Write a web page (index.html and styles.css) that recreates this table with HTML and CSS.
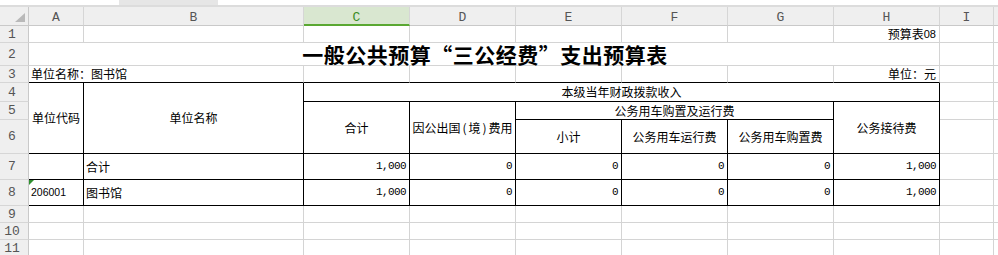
FILE: index.html
```html
<!DOCTYPE html>
<html lang="zh-CN">
<head>
<meta charset="utf-8">
<title>一般公共预算“三公经费”支出预算表</title>
<link rel="stylesheet" href="styles.css">
</head>
<body>
<div class="tabs"><div class="tab tab-a"></div><div class="tab tab-b"></div></div>
<div class="sheet">
  <!-- column headers -->
  <div class="ch corner"><svg width="10" height="9" viewBox="0 0 10 9"><polygon points="10,0 10,9 0,9" fill="#b9b9b9"/></svg></div>
  <div class="ch">A</div><div class="ch">B</div><div class="ch ch-sel">C</div><div class="ch">D</div><div class="ch">E</div><div class="ch">F</div><div class="ch">G</div><div class="ch">H</div><div class="ch">I</div><div class="ch ch-end"></div>

  <!-- row 1 -->
  <div class="rh">1</div>
  <div class="c"></div><div class="c"></div><div class="c"></div><div class="c"></div><div class="c"></div><div class="c"></div><div class="c"></div>
  <div class="c r bot">预算表<span class="latin">08</span></div>
  <div class="c"></div><div class="c"></div>

  <!-- row 2 -->
  <div class="rh">2</div>
  <div class="c title span8">一般公共预算“三公经费”支出预算表</div>
  <div class="c"></div><div class="c"></div>

  <!-- row 3 -->
  <div class="rh">3</div>
  <div class="c span2 bot kb">单位名称：图书馆</div>
  <div class="c kb"></div><div class="c kb"></div><div class="c kb"></div><div class="c kb"></div><div class="c kb"></div>
  <div class="c r bot kb">单位：元</div>
  <div class="c"></div><div class="c"></div>

  <!-- row 4 -->
  <div class="rh">4</div>
  <div class="c m k rows3">单位代码</div>
  <div class="c m k rows3">单位名称</div>
  <div class="c m k span6">本级当年财政拨款收入</div>
  <div class="c"></div><div class="c"></div>

  <!-- row 5 -->
  <div class="rh">5</div>
  <div class="c m k rows2">合计</div>
  <div class="c m k rows2">因公出国<span class="paren">(</span>境<span class="paren">)</span>费用</div>
  <div class="c m k span3">公务用车购置及运行费</div>
  <div class="c m k rows2">公务接待费</div>
  <div class="c"></div><div class="c"></div>

  <!-- row 6 -->
  <div class="rh">6</div>
  <div class="c m k">小计</div>
  <div class="c m k">公务用车运行费</div>
  <div class="c m k">公务用车购置费</div>
  <div class="c"></div><div class="c"></div>

  <!-- row 7 -->
  <div class="rh">7</div>
  <div class="c k"></div>
  <div class="c k">合计</div>
  <div class="c k r num">1,000</div>
  <div class="c k r num">0</div>
  <div class="c k r num">0</div>
  <div class="c k r num">0</div>
  <div class="c k r num">0</div>
  <div class="c k r num">1,000</div>
  <div class="c"></div><div class="c"></div>

  <!-- row 8 -->
  <div class="rh">8</div>
  <div class="c k code"><span class="flag"></span>206001</div>
  <div class="c k">图书馆</div>
  <div class="c k r num">1,000</div>
  <div class="c k r num">0</div>
  <div class="c k r num">0</div>
  <div class="c k r num">0</div>
  <div class="c k r num">0</div>
  <div class="c k r num">1,000</div>
  <div class="c"></div><div class="c"></div>

  <!-- rows 9-11 -->
  <div class="rh">9</div>
  <div class="c"></div><div class="c"></div><div class="c"></div><div class="c"></div><div class="c"></div><div class="c"></div><div class="c"></div><div class="c"></div><div class="c"></div><div class="c"></div>
  <div class="rh">10</div>
  <div class="c"></div><div class="c"></div><div class="c"></div><div class="c"></div><div class="c"></div><div class="c"></div><div class="c"></div><div class="c"></div><div class="c"></div><div class="c"></div>
  <div class="rh">11</div>
  <div class="c"></div><div class="c"></div><div class="c"></div><div class="c"></div><div class="c"></div><div class="c"></div><div class="c"></div><div class="c"></div><div class="c"></div><div class="c"></div>
</div>
</body>
</html>
```

FILE: styles.css
```css
html, body {
  margin: 0;
  padding: 0;
  background: #ffffff;
  overflow: hidden;
}
body {
  width: 998px;
  height: 255px;
  font-family: "Noto Sans CJK SC", "Liberation Sans", sans-serif;
  font-size: 12px;
  color: #000;
}
.tabs {
  display: flex;
  height: 5px;
  border-bottom: 2px solid #dcdcdc;
  background: #ffffff;
}
.tab-a {
  width: 119px;
  background: #ffffff;
}
.tab-b {
  width: 99px;
  background: #e6e6e6;
}
.sheet {
  display: grid;
  grid-template-columns: 29px 55px 220px repeat(6, 106px) 54px 1fr;
  grid-template-rows: 19px 17px 23px 17px 19px 18px 34px 26px 26px 17px 17px 17px;
}
.sheet > div {
  box-sizing: border-box;
  min-width: 0;
}
.ch {
  background: #efefef;
  border-right: 1px solid #d6d6d6;
  border-bottom: 1px solid #c9c9c9;
  font-family: "Liberation Mono", monospace;
  font-size: 13px;
  color: #555;
  display: flex;
  align-items: center;
  justify-content: center;
  padding-top: 3px;
}
.corner {
  justify-content: flex-end;
  align-items: flex-start;
  padding: 6px 3px 0 0;
  border-right-color: #c9c9c9;
}
.corner svg { display: block; }
.ch-end { border-right: none; }
.ch-sel {
  background: #d9e7d0;
  color: #3c8c26;
  border-bottom: 2px solid #5aa832;
  padding-top: 4px;
}
.rh {
  background: #efefef;
  border-right: 1px solid #c9c9c9;
  border-bottom: 1px solid #d6d6d6;
  font-family: "Liberation Mono", monospace;
  font-size: 13px;
  color: #555;
  display: flex;
  align-items: center;
  justify-content: center;
  padding-right: 4px;
}
.c {
  border-right: 1px solid #d4d4d4;
  border-bottom: 1px solid #d4d4d4;
  display: flex;
  align-items: center;
  padding: 0 2px;
  white-space: nowrap;
  overflow: hidden;
  line-height: 1;
}
.r { justify-content: flex-end; padding-right: 3px; }
.m { justify-content: center; text-align: center; }
.bot { align-items: flex-end; padding-bottom: 2px; }
.k { border-right-color: #000; border-bottom-color: #000; }
.kb { border-bottom-color: #000; }
.span2 { grid-column: span 2; }
.span3 { grid-column: span 3; }
.span6 { grid-column: span 6; }
.span8 { grid-column: span 8; }
.rows2 { grid-row: span 2; }
.rows3 { grid-row: span 3; }
.title {
  justify-content: center;
  font-size: 21px;
  font-weight: 700;
  letter-spacing: 0.5px;
  padding-left: 4px;
  overflow: visible;
  line-height: 23px;
}
.paren {
  padding: 0 2px;
}
.latin {
  font-family: "Liberation Sans", sans-serif;
  font-size: 11px;
}
.num {
  font-family: "Liberation Mono", monospace;
  font-size: 11px;
  letter-spacing: -0.6px;
}
.code {
  position: relative;
  font-family: "Liberation Sans", sans-serif;
  font-size: 10.5px;
  padding-left: 2px;
}
.flag {
  position: absolute;
  left: 0;
  top: 0;
  width: 0;
  height: 0;
  border-top: 5px solid #2f8f2f;
  border-right: 5px solid transparent;
}
```
